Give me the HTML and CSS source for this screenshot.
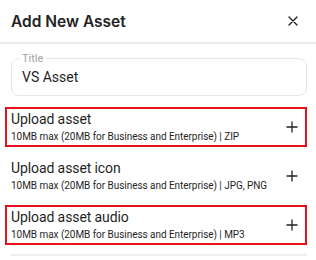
FILE: index.html
```html
<!DOCTYPE html>
<html>
<head>
    <title>Add New Asset</title>
    <link rel="stylesheet" href="styles.css">
</head>
<body>
    <div class="dialog">
        <div class="header">
            <h1>Add New Asset</h1>
            <span class="close">
                <svg width="10" height="10" viewBox="0 0 10 10"><path d="M1 1L9 9M9 1L1 9" stroke="#222" stroke-width="1.4" stroke-linecap="round"/></svg>
            </span>
        </div>

        <div class="content">
            <fieldset class="field">
                <legend>Title</legend>
                <div class="value">VS Asset</div>
            </fieldset>

            <div class="upload marked">
                <div class="info">
                    <div class="name">Upload asset</div>
                    <div class="hint">10MB max (20MB for Business and Enterprise) | ZIP</div>
                </div>
                <span class="plus"><svg width="12" height="12" viewBox="0 0 12 12"><path d="M6 0.5V11.5M0.5 6H11.5" stroke="#222" stroke-width="1.3"/></svg></span>
            </div>

            <div class="upload">
                <div class="info">
                    <div class="name">Upload asset icon</div>
                    <div class="hint">10MB max (20MB for Business and Enterprise) | JPG, PNG</div>
                </div>
                <span class="plus"><svg width="12" height="12" viewBox="0 0 12 12"><path d="M6 0.5V11.5M0.5 6H11.5" stroke="#222" stroke-width="1.3"/></svg></span>
            </div>

            <div class="upload marked">
                <div class="info">
                    <div class="name">Upload asset audio</div>
                    <div class="hint">10MB max (20MB for Business and Enterprise) | MP3</div>
                </div>
                <span class="plus"><svg width="12" height="12" viewBox="0 0 12 12"><path d="M6 0.5V11.5M0.5 6H11.5" stroke="#222" stroke-width="1.3"/></svg></span>
            </div>

            <div class="next"></div>
        </div>
    </div>
</body>
</html>
```

FILE: styles.css
```css
body {
    margin: 0;
    background: #fff;
    font-family: Roboto, 'Liberation Sans', sans-serif;
    color: #1f1f1f;
}
.dialog {
    width: 316px;
    height: 260px;
    overflow: hidden;
}
.header {
    height: 42px;
    display: flex;
    justify-content: space-between;
    align-items: center;
    padding: 0 18px 0 11px;
    border-bottom: 2px solid #e9ebee;
}
.header h1 {
    margin: 0;
    font-family: 'Inter', sans-serif;
    font-size: 15.5px;
    font-weight: 600;
    color: #222;
}
.close {
    display: flex;
}
.content {
    padding: 8px 9px 0 5px;
    display: flex;
    flex-direction: column;
}
.field {
    margin: 0 0 11px 6px;
    padding: 0 10px 9px 10px;
    border: 1px solid #e6e6e6;
    border-radius: 8px;
}
.field legend {
    font-size: 11px;
    line-height: 13px;
    color: #a3a3a3;
    padding: 0 3px;
    margin-left: -3px;
}
.value {
    font-size: 14px;
    line-height: 18px;
    margin-top: 3px;
}
.upload {
    height: 36px;
    display: flex;
    align-items: center;
    justify-content: space-between;
    padding: 0 7px 0 4px;
    border: 2px solid transparent;
    margin-bottom: 9px;
}
.upload.marked {
    border-color: #e8141c;
}
.name {
    font-size: 14px;
    line-height: 16px;
    letter-spacing: -0.1px;
}
.hint {
    font-size: 10px;
    line-height: 12px;
    margin-top: 4px;
    letter-spacing: -0.05px;
    white-space: nowrap;
}
.plus {
    display: flex;
}
.next {
    margin: 0 0 0 6px;
    height: 20px;
    border-top: 2px solid #eceef1;
}
```
